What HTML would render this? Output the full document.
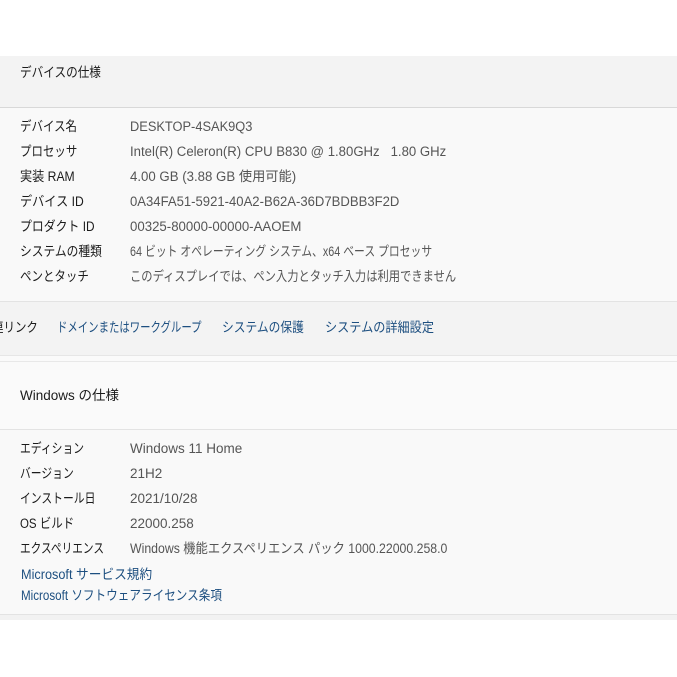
<!DOCTYPE html>
<html><head><meta charset="utf-8"><style>
body{margin:0;width:677px;height:677px;background:#fff;font-family:"Liberation Sans","Noto Sans CJK JP",sans-serif;font-size:13.5px;color:#1b1b1b;position:relative;overflow:hidden}
.a{position:absolute;left:0;width:677px}
.t{position:absolute;white-space:nowrap;line-height:18px;transform-origin:0 50%}
.v{color:#555}
.l{color:#1d4f80}
</style></head><body>
<div class="a" style="top:56px;height:51px;background:#f3f3f3;border-bottom:1px solid #d8d8d8"></div>
<div class="a" style="top:108px;height:193px;background:#f9f9f9;border-bottom:1px solid #e3e3e3"></div>
<div class="a" style="top:302px;height:53px;background:#f3f3f3;border-bottom:1px solid #e6e6e6"></div>
<div class="a" style="top:356px;height:5px;background:#fafafa;border-bottom:1px solid #e8e8e8"></div>
<div class="a" style="top:362px;height:67px;background:#fafafa;border-bottom:1px solid #e3e3e3"></div>
<div class="a" style="top:430px;height:184px;background:#f9f9f9;border-bottom:1px solid #e3e3e3"></div>
<div class="a" style="top:615px;height:5px;background:#f2f2f2"></div>

<div class="t" style="left:20px;top:64px;transform:scaleX(.86)">デバイスの仕様</div>
<div class="t" style="left:20px;top:118px;transform:scaleX(.85)">デバイス名</div><div class="t v" style="left:130px;top:118px;transform:scaleX(.95)">DESKTOP-4SAK9Q3</div>
<div class="t" style="left:20px;top:143px;transform:scaleX(.85)">プロセッサ</div><div class="t v" style="left:130px;top:143px;transform:scaleX(.975)">Intel(R) Celeron(R) CPU B830 @ 1.80GHz &nbsp; 1.80 GHz</div>
<div class="t" style="left:20px;top:168px;transform:scaleX(.9)">実装 RAM</div><div class="t v" style="left:130px;top:168px;transform:scaleX(.98)">4.00 GB (3.88 GB 使用可能)</div>
<div class="t" style="left:20px;top:193px;transform:scaleX(.9)">デバイス ID</div><div class="t v" style="left:130px;top:193px;transform:scaleX(.97)">0A34FA51-5921-40A2-B62A-36D7BDBB3F2D</div>
<div class="t" style="left:20px;top:218px;transform:scaleX(.88)">プロダクト ID</div><div class="t v" style="left:130px;top:218px;transform:scaleX(.98)">00325-80000-00000-AAOEM</div>
<div class="t" style="left:20px;top:243px;transform:scaleX(.87)">システムの種類</div><div class="t v" style="left:130px;top:243px;transform:scaleX(.8)">64 ビット オペレーティング システム、x64 ベース プロセッサ</div>
<div class="t" style="left:20px;top:268px;transform:scaleX(.85)">ペンとタッチ</div><div class="t v" style="left:130px;top:268px;transform:scaleX(.836)">このディスプレイでは、ペン入力とタッチ入力は利用できません</div>

<div class="t" style="left:-8px;top:319px;transform:scaleX(.85)">連リンク</div>
<div class="t l" style="left:57px;top:319px;transform:scaleX(.77)">ドメインまたはワークグループ</div>
<div class="t l" style="left:222px;top:319px;transform:scaleX(.87)">システムの保護</div>
<div class="t l" style="left:325px;top:319px;transform:scaleX(.9)">システムの詳細設定</div>

<div class="t" style="left:20px;top:387px">Windows の仕様</div>
<div class="t" style="left:20px;top:440px;transform:scaleX(.8)">エディション</div><div class="t v" style="left:130px;top:440px">Windows 11 Home</div>
<div class="t" style="left:20px;top:465px;transform:scaleX(.8)">バージョン</div><div class="t v" style="left:130px;top:465px">21H2</div>
<div class="t" style="left:20px;top:490px;transform:scaleX(.8)">インストール日</div><div class="t v" style="left:130px;top:490px">2021/10/28</div>
<div class="t" style="left:20px;top:515px;transform:scaleX(.85)">OS ビルド</div><div class="t v" style="left:130px;top:515px">22000.258</div>
<div class="t" style="left:20px;top:540px;transform:scaleX(.79)">エクスペリエンス</div><div class="t v" style="left:130px;top:540px;transform:scaleX(.91)">Windows 機能エクスペリエンス パック 1000.22000.258.0</div>
<div class="t l" style="left:21px;top:566px;transform:scaleX(.94)">Microsoft サービス規約</div>
<div class="t l" style="left:21px;top:587px;transform:scaleX(.86)">Microsoft ソフトウェアライセンス条項</div>
</body></html>
